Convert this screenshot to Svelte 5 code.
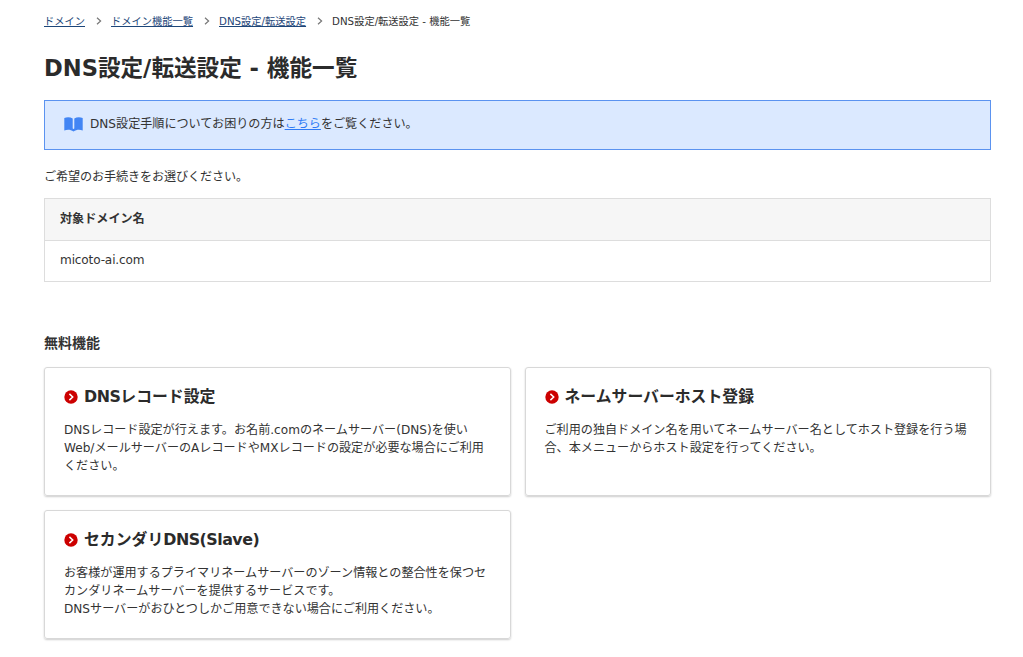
<script lang="ts">
  interface Crumb {
    label: string;
    href?: string;
  }

  interface Feature {
    title: string;
    lines: string[];
  }

  const crumbs: Crumb[] = [
    { label: 'ドメイン', href: '#domain' },
    { label: 'ドメイン機能一覧', href: '#features' },
    { label: 'DNS設定/転送設定', href: '#dns' },
    { label: 'DNS設定/転送設定 - 機能一覧' },
  ];

  const domain = 'micoto-ai.com';

  const features: Feature[] = [
    {
      title: 'DNSレコード設定',
      lines: [
        'DNSレコード設定が行えます。お名前.comのネームサーバー(DNS)を使い',
        'Web/メールサーバーのAレコードやMXレコードの設定が必要な場合にご利用',
        'ください。',
      ],
    },
    {
      title: 'ネームサーバーホスト登録',
      lines: [
        'ご利用の独自ドメイン名を用いてネームサーバー名としてホスト登録を行う場',
        '合、本メニューからホスト設定を行ってください。',
      ],
    },
    {
      title: 'セカンダリDNS(Slave)',
      lines: [
        'お客様が運用するプライマリネームサーバーのゾーン情報との整合性を保つセ',
        'カンダリネームサーバーを提供するサービスです。',
        'DNSサーバーがおひとつしかご用意できない場合にご利用ください。',
      ],
    },
  ];

  // Latin runs are set a little tighter than the kana and kanji around them
  function splitRuns(text: string) {
    return (text.match(/[\x20-\x7e]+|[^\x20-\x7e]+/g) ?? []).map((run) => ({
      run,
      latin: /^[\x20-\x7e]/.test(run),
    }));
  }
</script>

<main>
  <nav class="breadcrumb">
    {#each crumbs as crumb, i (i)}
      {#if i > 0}
        <svg class="separator" width="6" height="8" viewBox="0 0 6 8">
          <path d="M1 0.8L4.6 4L1 7.2" fill="none" stroke="#777" stroke-width="1.2" />
        </svg>
      {/if}
      {#if crumb.href}
        <a href={crumb.href}>{crumb.label}</a>
      {:else}
        <span>{crumb.label}</span>
      {/if}
    {/each}
  </nav>

  <h1>DNS設定/転送設定 - 機能一覧</h1>

  <div class="notice">
    <svg width="19" height="15" viewBox="0 0 19 15" fill="#4285f4">
      <path
        d="M0.3 1.1C3 -0.1 6.2 0 8.7 1.5V11.6L9.5 12L10.3 11.6V1.5C12.8 0 16 -0.1 18.7 1.1V13.4C15.5 12.2 12.5 12.4 9.5 14.4C6.5 12.4 3.5 12.2 0.3 13.4Z"
      />
    </svg>
    <p>DNS設定手順についてお困りの方は<a href="#guide">こちら</a>をご覧ください。</p>
  </div>

  <p class="lead">ご希望のお手続きをお選びください。</p>

  <table>
    <thead>
      <tr><th>対象ドメイン名</th></tr>
    </thead>
    <tbody>
      <tr><td>{domain}</td></tr>
    </tbody>
  </table>

  <h2>無料機能</h2>

  <div class="cards">
    {#each features as feature (feature.title)}
      <section class="card">
        <h3>
          <svg width="14" height="14" viewBox="0 0 14 14">
            <circle cx="7" cy="7" r="6.7" fill="#cc0000" />
            <path d="M5.4 3.9L8.7 7L5.4 10.1" fill="none" stroke="#fff" stroke-width="1.5" />
          </svg>
          <span>
            {#each splitRuns(feature.title) as { run, latin }, i (i)}<span class:latin>{run}</span>{/each}
          </span>
        </h3>
        <p>
          {#each feature.lines as line (line)}
            <span class="line">{line}</span>
          {/each}
        </p>
      </section>
    {/each}
  </div>
</main>

<style>
  :global(body) {
    margin: 0;
    background: #fff;
  }

  main {
    box-sizing: border-box;
    width: 1023px;
    height: 657px;
    padding: 12px 32px 0 44px;
    overflow: hidden;
    font-family: 'DejaVu Sans', 'Noto Sans CJK JP', sans-serif;
    font-size: 12.1px;
    line-height: 18px;
    color: #333;
    white-space: nowrap;
  }

  h1,
  h2,
  h3,
  p {
    margin: 0;
  }

  .breadcrumb {
    display: flex;
    align-items: center;
    height: 18px;
    font-size: 10.25px;
  }

  .breadcrumb a {
    color: #1d4679;
    text-underline-offset: 1px;
  }

  .separator {
    margin: 0 9px 0 11px;
  }

  h1 {
    margin-top: 20px;
    font-size: 22.6px;
    line-height: 36px;
    color: #2b2b2b;
  }

  .notice {
    display: flex;
    box-sizing: border-box;
    height: 50px;
    margin-top: 14px;
    padding: 14px 19px 13px;
    border: 1px solid #5b93f0;
    background: #dbe9ff;
  }

  .notice svg {
    margin: 2px 7px 0 0;
  }

  .notice a {
    color: #2f7bf5;
  }

  .lead {
    margin-top: 18px;
    letter-spacing: -0.1px;
  }

  table {
    width: 100%;
    margin-top: 12px;
    border-collapse: collapse;
  }

  th,
  td {
    height: 40px;
    padding: 0 15px;
    border: 1px solid #ddd;
    text-align: left;
  }

  th {
    height: 39px;
    padding-bottom: 2px;
    background: #f6f6f6;
  }

  td {
    height: 38px;
    padding-bottom: 2px;
    letter-spacing: -0.15px;
  }

  h2 {
    margin-top: 51px;
    font-size: 14px;
    line-height: 20px;
  }

  .cards {
    display: grid;
    grid-template-columns: 1fr 1fr;
    gap: 14px;
    margin-top: 14px;
  }

  .card {
    box-sizing: border-box;
    height: 129px;
    padding: 17px 19px;
    border: 1px solid #d8d8d8;
    border-radius: 3px;
    box-shadow: 0 1px 2px rgba(0, 0, 0, 0.2);
  }

  h3 {
    display: flex;
    align-items: center;
    gap: 6px;
    font-size: 15.85px;
    line-height: 24px;
    color: #2b2b2b;
  }

  h3 svg {
    margin-bottom: 1px;
  }

  .latin {
    letter-spacing: -0.5px;
  }

  .card p {
    margin-top: 12px;
  }

  .line {
    display: block;
  }
</style>
